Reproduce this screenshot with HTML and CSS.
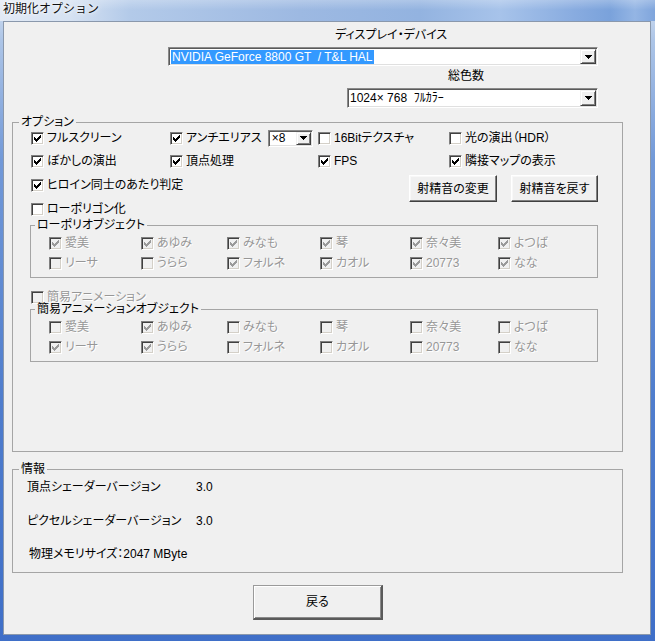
FILE: index.html
```html
<!DOCTYPE html>
<html lang="ja">
<head>
<meta charset="utf-8">
<title>初期化オプション</title>
<link rel="stylesheet" href="styles.css">
</head>
<body>
<div class="window">
  <header class="titlebar"><span class="title">初期化オプション</span></header>
  <main class="client">
    <section class="device">
      <div class="lbl lbl-device">ディスプレイ・デバイス</div>
      <div class="combo combo-device">
        <span class="combo-value"><span class="sel">NVIDIA GeForce 8800 GT  / T&amp;L HAL</span></span>
        <span class="combo-btn"><svg class="arrow" width="7" height="4" viewBox="0 0 7 4"><path d="M0 0h7v1H0zM1 1h5v1H1zM2 2h3v1H2zM3 3h1v1H3z"/></svg></span>
      </div>
      <div class="lbl lbl-color">総色数</div>
      <div class="combo combo-color">
        <span class="combo-value">1024× 768  ﾌﾙｶﾗｰ</span>
        <span class="combo-btn"><svg class="arrow" width="7" height="4" viewBox="0 0 7 4"><path d="M0 0h7v1H0zM1 1h5v1H1zM2 2h3v1H2zM3 3h1v1H3z"/></svg></span>
      </div>
    </section>

    <fieldset class="group options">
      <legend>オプション</legend>
      <div class="opt-row">
        <label class="cb"><span class="box"><svg class="chk" width="7" height="7" viewBox="0 0 7 7"><path d="M0 2h1v3H0zM1 3h1v3H1zM2 4h1v3H2zM3 3h1v3H3zM4 2h1v3H4zM5 1h1v3H5zM6 0h1v3H6z"/></svg></span><span>フルスクリーン</span></label>
        <div class="cell-aa">
          <label class="cb"><span class="box"><svg class="chk" width="7" height="7" viewBox="0 0 7 7"><path d="M0 2h1v3H0zM1 3h1v3H1zM2 4h1v3H2zM3 3h1v3H3zM4 2h1v3H4zM5 1h1v3H5zM6 0h1v3H6z"/></svg></span><span>アンチエリアス</span></label>
          <div class="combo combo-aa">
            <span class="combo-value">×8</span>
            <span class="combo-btn"><svg class="arrow" width="7" height="4" viewBox="0 0 7 4"><path d="M0 0h7v1H0zM1 1h5v1H1zM2 2h3v1H2zM3 3h1v1H3z"/></svg></span>
          </div>
        </div>
        <label class="cb"><span class="box"></span><span>16Bitテクスチャ</span></label>
        <label class="cb"><span class="box"></span><span>光の演出（HDR）</span></label>
      </div>
      <div class="opt-row r2">
        <label class="cb"><span class="box"><svg class="chk" width="7" height="7" viewBox="0 0 7 7"><path d="M0 2h1v3H0zM1 3h1v3H1zM2 4h1v3H2zM3 3h1v3H3zM4 2h1v3H4zM5 1h1v3H5zM6 0h1v3H6z"/></svg></span><span>ぼかしの演出</span></label>
        <label class="cb"><span class="box"><svg class="chk" width="7" height="7" viewBox="0 0 7 7"><path d="M0 2h1v3H0zM1 3h1v3H1zM2 4h1v3H2zM3 3h1v3H3zM4 2h1v3H4zM5 1h1v3H5zM6 0h1v3H6z"/></svg></span><span>頂点処理</span></label>
        <label class="cb"><span class="box"><svg class="chk" width="7" height="7" viewBox="0 0 7 7"><path d="M0 2h1v3H0zM1 3h1v3H1zM2 4h1v3H2zM3 3h1v3H3zM4 2h1v3H4zM5 1h1v3H5zM6 0h1v3H6z"/></svg></span><span>FPS</span></label>
        <label class="cb"><span class="box"><svg class="chk" width="7" height="7" viewBox="0 0 7 7"><path d="M0 2h1v3H0zM1 3h1v3H1zM2 4h1v3H2zM3 3h1v3H3zM4 2h1v3H4zM5 1h1v3H5zM6 0h1v3H6z"/></svg></span><span>隣接マップの表示</span></label>
      </div>
      <div class="r3">
        <label class="cb"><span class="box"><svg class="chk" width="7" height="7" viewBox="0 0 7 7"><path d="M0 2h1v3H0zM1 3h1v3H1zM2 4h1v3H2zM3 3h1v3H3zM4 2h1v3H4zM5 1h1v3H5zM6 0h1v3H6z"/></svg></span><span>ヒロイン同士のあたり判定</span></label>
        <div class="btns">
          <button class="btn btn-a" type="button">射精音の変更</button>
          <button class="btn btn-b" type="button">射精音を戻す</button>
        </div>
      </div>
      <div class="r4">
        <label class="cb"><span class="box"></span><span>ローポリゴン化</span></label>
      </div>

      <fieldset class="group sub sub1">
        <legend>ローポリオブジェクト</legend>
        <div class="sub-row">
          <label class="cb dis"><span class="box"><svg class="chk" width="7" height="7" viewBox="0 0 7 7"><path d="M0 2h1v3H0zM1 3h1v3H1zM2 4h1v3H2zM3 3h1v3H3zM4 2h1v3H4zM5 1h1v3H5zM6 0h1v3H6z"/></svg></span><span>愛美</span></label>
          <label class="cb dis"><span class="box"><svg class="chk" width="7" height="7" viewBox="0 0 7 7"><path d="M0 2h1v3H0zM1 3h1v3H1zM2 4h1v3H2zM3 3h1v3H3zM4 2h1v3H4zM5 1h1v3H5zM6 0h1v3H6z"/></svg></span><span>あゆみ</span></label>
          <label class="cb dis"><span class="box"><svg class="chk" width="7" height="7" viewBox="0 0 7 7"><path d="M0 2h1v3H0zM1 3h1v3H1zM2 4h1v3H2zM3 3h1v3H3zM4 2h1v3H4zM5 1h1v3H5zM6 0h1v3H6z"/></svg></span><span>みなも</span></label>
          <label class="cb dis"><span class="box"><svg class="chk" width="7" height="7" viewBox="0 0 7 7"><path d="M0 2h1v3H0zM1 3h1v3H1zM2 4h1v3H2zM3 3h1v3H3zM4 2h1v3H4zM5 1h1v3H5zM6 0h1v3H6z"/></svg></span><span>琴</span></label>
          <label class="cb dis"><span class="box"><svg class="chk" width="7" height="7" viewBox="0 0 7 7"><path d="M0 2h1v3H0zM1 3h1v3H1zM2 4h1v3H2zM3 3h1v3H3zM4 2h1v3H4zM5 1h1v3H5zM6 0h1v3H6z"/></svg></span><span>奈々美</span></label>
          <label class="cb dis"><span class="box"><svg class="chk" width="7" height="7" viewBox="0 0 7 7"><path d="M0 2h1v3H0zM1 3h1v3H1zM2 4h1v3H2zM3 3h1v3H3zM4 2h1v3H4zM5 1h1v3H5zM6 0h1v3H6z"/></svg></span><span>よつば</span></label>
        </div>
        <div class="sub-row">
          <label class="cb dis"><span class="box"></span><span>リーサ</span></label>
          <label class="cb dis"><span class="box"></span><span>うらら</span></label>
          <label class="cb dis"><span class="box"><svg class="chk" width="7" height="7" viewBox="0 0 7 7"><path d="M0 2h1v3H0zM1 3h1v3H1zM2 4h1v3H2zM3 3h1v3H3zM4 2h1v3H4zM5 1h1v3H5zM6 0h1v3H6z"/></svg></span><span>フォルネ</span></label>
          <label class="cb dis"><span class="box"><svg class="chk" width="7" height="7" viewBox="0 0 7 7"><path d="M0 2h1v3H0zM1 3h1v3H1zM2 4h1v3H2zM3 3h1v3H3zM4 2h1v3H4zM5 1h1v3H5zM6 0h1v3H6z"/></svg></span><span>カオル</span></label>
          <label class="cb dis"><span class="box"><svg class="chk" width="7" height="7" viewBox="0 0 7 7"><path d="M0 2h1v3H0zM1 3h1v3H1zM2 4h1v3H2zM3 3h1v3H3zM4 2h1v3H4zM5 1h1v3H5zM6 0h1v3H6z"/></svg></span><span>20773</span></label>
          <label class="cb dis"><span class="box"><svg class="chk" width="7" height="7" viewBox="0 0 7 7"><path d="M0 2h1v3H0zM1 3h1v3H1zM2 4h1v3H2zM3 3h1v3H3zM4 2h1v3H4zM5 1h1v3H5zM6 0h1v3H6z"/></svg></span><span>なな</span></label>
        </div>
      </fieldset>

      <div class="anim-row">
        <label class="cb dis"><span class="box"></span><span>簡易アニメーション</span></label>
      </div>

      <fieldset class="group sub sub2">
        <legend>簡易アニメーションオブジェクト</legend>
        <div class="sub-row">
          <label class="cb dis"><span class="box"></span><span>愛美</span></label>
          <label class="cb dis"><span class="box"><svg class="chk" width="7" height="7" viewBox="0 0 7 7"><path d="M0 2h1v3H0zM1 3h1v3H1zM2 4h1v3H2zM3 3h1v3H3zM4 2h1v3H4zM5 1h1v3H5zM6 0h1v3H6z"/></svg></span><span>あゆみ</span></label>
          <label class="cb dis"><span class="box"></span><span>みなも</span></label>
          <label class="cb dis"><span class="box"></span><span>琴</span></label>
          <label class="cb dis"><span class="box"></span><span>奈々美</span></label>
          <label class="cb dis"><span class="box"></span><span>よつば</span></label>
        </div>
        <div class="sub-row">
          <label class="cb dis"><span class="box"><svg class="chk" width="7" height="7" viewBox="0 0 7 7"><path d="M0 2h1v3H0zM1 3h1v3H1zM2 4h1v3H2zM3 3h1v3H3zM4 2h1v3H4zM5 1h1v3H5zM6 0h1v3H6z"/></svg></span><span>リーサ</span></label>
          <label class="cb dis"><span class="box"><svg class="chk" width="7" height="7" viewBox="0 0 7 7"><path d="M0 2h1v3H0zM1 3h1v3H1zM2 4h1v3H2zM3 3h1v3H3zM4 2h1v3H4zM5 1h1v3H5zM6 0h1v3H6z"/></svg></span><span>うらら</span></label>
          <label class="cb dis"><span class="box"></span><span>フォルネ</span></label>
          <label class="cb dis"><span class="box"></span><span>カオル</span></label>
          <label class="cb dis"><span class="box"></span><span>20773</span></label>
          <label class="cb dis"><span class="box"></span><span>なな</span></label>
        </div>
      </fieldset>
    </fieldset>

    <fieldset class="group info">
      <legend>情報</legend>
      <div class="info-row"><span>頂点シェーダーバージョン</span><span>3.0</span></div>
      <div class="info-row r-pix"><span>ピクセルシェーダーバージョン</span><span>3.0</span></div>
      <div class="info-row r-mem"><span>物理メモリサイズ：2047 MByte</span></div>
    </fieldset>

    <button class="btn ok-btn" type="button">戻る</button>
  </main>
</div>
</body>
</html>
```
FILE: styles.css
```css
* { box-sizing: border-box; }
html, body { margin: 0; padding: 0; }
body {
  width: 655px;
  height: 641px;
  overflow: hidden;
  font-family: "Liberation Sans", "Noto Sans CJK JP", sans-serif;
  font-size: 12px;
  line-height: 14px;
  color: #000;
  font-feature-settings: "palt" 1;
  background: linear-gradient(180deg, #d3dff0 0px, #adc5e7 40px, #7299d8 160px, #4f7dcd 400px, #3f6fc8 641px);
}
.window {
  width: 655px;
  height: 641px;
  display: flex;
  flex-direction: column;
}
.titlebar {
  flex: none;
  height: 21px;
  padding: 1px 0 0 3px;
  background:
    linear-gradient(180deg, rgba(255,255,255,0.25) 0px, rgba(255,255,255,0) 10px),
    linear-gradient(90deg, #e2eaf5 0px, #d6e2f2 70px, #b3cae9 130px, #9db9e2 300px, #93b3e0 420px, #a7c3ea 500px, #86aadf 580px, #7aa2db 610px, #94b5e4 635px, #7fa5dc 655px);
}
.title {
  font-family: "Noto Sans CJK JP", sans-serif;
  font-feature-settings: normal;
  line-height: 14px;
  color: #111;
  text-shadow: 0 0 6px #fff, 0 0 3px #fff;
}
.client {
  flex: none;
  height: 614px;
  margin: 0 4px 0 3px;
  border: 1px solid #8a98ac;
  background: #f0f0f0;
}

/* device section */
.device {
  padding-top: 6px;
  margin-left: 164px;
  width: 430px;
}
.lbl { line-height: 14px; white-space: nowrap; }
.lbl-device { padding-left: 167px; }
.lbl-color { margin-top: 3px; padding-left: 280px; }

.combo {
  display: flex;
  background: #fff;
  border: 1px solid;
  border-color: #8a8a8a #fff #fff #8a8a8a;
  box-shadow: inset 1px 1px 0 #5a5a5a, inset -1px -1px 0 #e0e0e0;
  padding: 1px;
}
.combo-device { margin-top: 5px; height: 19px; }
.combo-color { margin-top: 5px; height: 20px; margin-left: 179px; width: 251px; }
.combo-value {
  flex: 1;
  display: flex;
  align-items: center;
  white-space: pre;
  padding-left: 1px;
  overflow: hidden;
}
.sel {
  background: #3399ff;
  color: #fff;
  padding: 0 1px;
  line-height: 14px;
}
.combo-btn {
  flex: none;
  width: 16px;
  display: flex;
  align-items: center;
  justify-content: center;
  background: #f0f0f0;
  border: 1px solid;
  border-color: #f0f0f0 #404040 #404040 #f0f0f0;
  box-shadow: inset 1px 1px 0 #fff, inset -1px -1px 0 #808080;
}
.arrow { display: block; fill: #000; }

/* group boxes */
.group {
  margin: 0;
  padding: 0;
  border: 1px solid #a5a5a5;
  min-inline-size: 0;
}
.group > legend {
  padding: 0 2px;
  line-height: 14px;
  white-space: nowrap;
}
.options {
  margin: 7px 0 0 8px;
  width: 611px;
  padding: 0 0 89px 17px;
}
.options > legend { margin-left: -11px; }

.opt-row {
  display: grid;
  grid-template-columns: 139px 148px 131px auto;
  height: 18px;
  align-items: center;
  padding-left: 1px;
}
.opt-row.r2 { margin-top: 5px; }
.cell-aa { display: flex; align-items: center; }
.combo-aa {
  width: 45px;
  height: 17px;
  margin-left: 6px;
}
.combo-aa .combo-value { padding-left: 2px; }
.combo-aa .combo-btn { width: 15px; }

.r3 {
  display: flex;
  align-items: flex-start;
  height: 18px;
  margin-top: 6px;
  padding-left: 1px;
}
.r3 > .cb { height: 18px; }
.btns {
  display: flex;
  gap: 14px;
  margin: -1px 24px 0 auto;
}
.r4 {
  display: flex;
  align-items: center;
  height: 18px;
  margin-top: 6px;
  padding-left: 1px;
}

.btn {
  display: flex;
  align-items: center;
  justify-content: center;
  margin: 0;
  padding: 0;
  font: inherit;
  color: #000;
  background: #f0f0f0;
  border: 1px solid;
  border-color: #fff #404040 #404040 #fff;
  box-shadow: inset -1px -1px 0 #808080, inset 1px 1px 0 #f8f8f8;
  flex: none;
}
.btn-a { width: 88px; height: 27px; }
.btn-b { width: 87px; height: 27px; }

/* checkboxes */
.cb {
  display: inline-flex;
  align-items: center;
  gap: 3px;
  white-space: nowrap;
}
.box {
  flex: none;
  width: 13px;
  height: 13px;
  display: flex;
  align-items: center;
  justify-content: center;
  background: #fff;
  border: 1px solid;
  border-color: #808080 #fff #fff #808080;
  box-shadow: inset 1px 1px 0 #404040, inset -1px -1px 0 #d4d0c8;
}
.chk { display: block; fill: #000; }
.cb.dis { color: #979797; text-shadow: 1px 1px 0 #fff; }
.cb.dis .box { background: #f0f0f0; }
.cb.dis .chk { fill: #9a9a9a; }

/* sub groups */
.sub {
  width: 568px;
  padding: 2px 0 5px 18px;
}
.sub > legend { margin-left: -14px; }
.sub-row {
  display: grid;
  grid-template-columns: 92px 86px 93px 90px 88px auto;
  height: 18px;
  align-items: center;
}
.sub-row + .sub-row { margin-top: 2px; }
.anim-row {
  display: flex;
  align-items: center;
  height: 12px;
  margin-top: 13px;
  padding-left: 1px;
}
.anim-row .cb { line-height: 11px; height: 11px; }
.sub2 { padding-top: 3px; }
.sub2 > legend { line-height: 12px; }

/* info group */
.info {
  margin: 10px 0 0 8px;
  width: 611px;
  padding: 4px 0 11px 14px;
}
.info > legend { margin-left: -8px; }
.info-row {
  display: grid;
  grid-template-columns: 169px auto;
  line-height: 14px;
}
.info-row.r-pix { margin-top: 20px; }
.info-row.r-mem { margin-top: 19px; padding-left: 2px; }

.ok-btn {
  width: 130px;
  height: 35px;
  margin: 12px 0 0 249px;
  border-color: #9a9a9a #5a5a5a #5a5a5a #9a9a9a;
  border-right-width: 2px;
  border-bottom-width: 2px;
  box-shadow: inset 1px 1px 0 #fff, inset -1px -1px 0 #8a8a8a;
}
```
